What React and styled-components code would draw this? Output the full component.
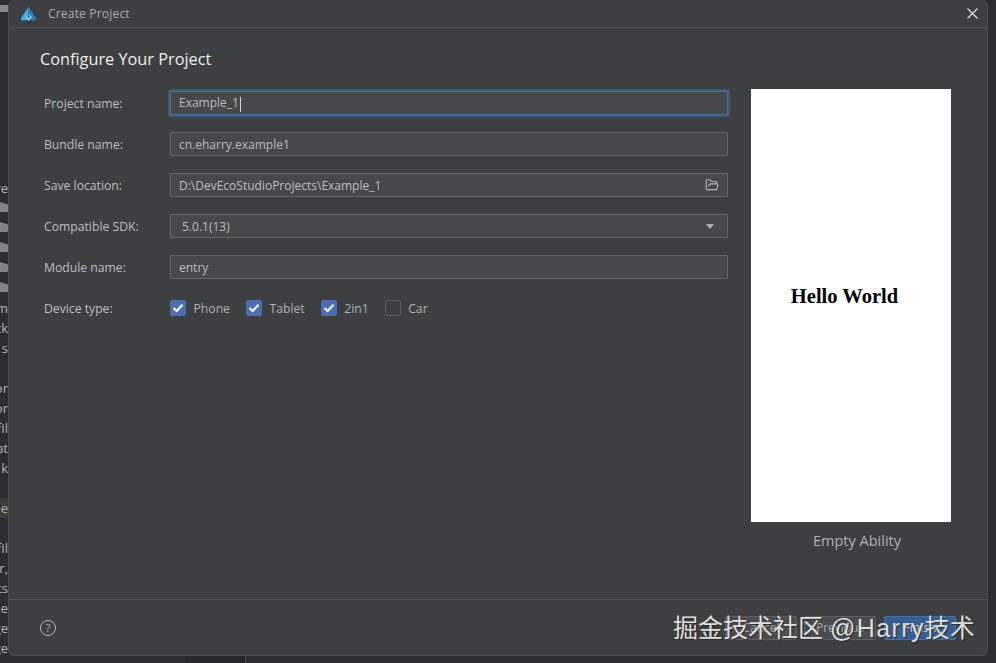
import React from 'react';
import styled, { createGlobalStyle } from 'styled-components';
import { LuFolderOpen } from 'react-icons/lu';

const sideRows = ['', '', '', '', '', '', '', '', 're', 'f', 'f', 'f', 'f', 'f', 'm', 'ck', 's', '', 'or', 'or', 'fil', 'at', 'k', '', 'e', '', 'fil', 'r,', 'ts', 'e', 'ge', 'ge'];
const fields = [
  { label: 'Bundle name:', value: 'cn.eharry.example1' },
  { label: 'Save location:', value: 'D:\\DevEcoStudioProjects\\Example_1', folder: true },
  { label: 'Compatible SDK:', value: '5.0.1(13)', select: true },
  { label: 'Module name:', value: 'entry' },
];
const devices = [
  { name: 'Phone', checked: true },
  { name: 'Tablet', checked: true },
  { name: '2in1', checked: true },
  { name: 'Car', checked: false },
];

const GlobalStyle = createGlobalStyle`
  html, body {
    margin: 0;
    height: 100%;
    background: #2b2d30;
    overflow: hidden;
    font-family: "Open Sans", "Noto Sans", "Liberation Sans", sans-serif;
  }
`;

const Page = styled.div`
  position: relative;
  width: 996px;
  height: 663px;
  overflow: hidden;
`;

const Backdrop = styled.div`
  width: 8px;
  padding-top: 5px;
  display: flex;
  flex-direction: column;
  overflow: hidden;
`;

const CornerMark = styled.div`
  height: 7px;
  margin-bottom: 6px;
  flex: none;
  background: #85888b;
`;

const SideRow = styled.div`
  height: 20px;
  flex: none;
  line-height: 20px;
  font-size: 13px;
  color: #b4b6b8;
  white-space: nowrap;
  display: flex;
  justify-content: flex-end;
  background: ${(p) => (p.$active ? '#3d3b38' : 'transparent')};
`;

const SideFolder = styled.div`
  width: 8px;
  height: 10px;
  margin-top: 4px;
  background: #7f8489;
  clip-path: polygon(0 0, 100% 25%, 100% 100%, 0 100%);
`;

const Dialog = styled.div`
  position: absolute;
  left: 8px;
  top: 0;
  width: 980px;
  height: 656px;
  display: flex;
  flex-direction: column;
  box-sizing: border-box;
  background: #3d3f41;
  border: 1px solid #4c4e50;
  border-top: none;
  border-radius: 6px;
`;

const TitleBar = styled.div`
  height: 28px;
  flex: none;
  box-sizing: border-box;
  display: flex;
  align-items: center;
  padding: 0 9px 0 11px;
  gap: 11px;
  border-bottom: 1px solid #515355;
`;

const TitleText = styled.span`
  flex: 1;
  font-size: 12.2px;
  color: #a9abad;
  letter-spacing: 0.1px;
`;

const Body = styled.div`
  flex: 1;
  display: flex;
  padding: 0 37px 0 31px;
  min-height: 0;
`;

const FormColumn = styled.div`
  width: 689px;
  flex: none;
`;

const Heading = styled.h1`
  margin: 20px 0 20px;
  font-size: 16.3px;
  line-height: 23px;
  font-weight: 500;
  color: #eceded;
`;

const Row = styled.div`
  display: flex;
  align-items: center;
  height: 24px;
  margin-bottom: 17px;
  padding-left: 4px;
`;

const Label = styled.label`
  width: 126px;
  flex: none;
  font-size: 12.2px;
  color: #bcbec0;
`;

const Field = styled.div`
  width: 558px;
  height: 24px;
  box-sizing: border-box;
  display: flex;
  align-items: center;
  justify-content: space-between;
  padding: 0 ${(p) => (p.$select ? '13px' : '8px')} 0 ${(p) => (p.$select ? '11px' : '8px')};
  background: #45494a;
  border: 1px solid #646668;
  border-radius: 1px;
  font-size: 12px;
  color: #bcbec0;
  ${(p) => p.$focus && `
    border: 1px solid #4f6f94;
    box-shadow: 0 0 0 2px #3c5a7e;
  `}
`;

const Caret = styled.span`
  display: inline-block;
  width: 1px;
  height: 15px;
  margin-left: 1px;
  vertical-align: middle;
  background: #d8d8d8;
`;

const Arrow = styled.span`
  width: 0;
  height: 0;
  border-left: 4px solid transparent;
  border-right: 4px solid transparent;
  border-top: 5px solid #b0b2b4;
`;

const FolderIcon = styled(LuFolderOpen)`
  width: 14px;
  height: 14px;
  color: #b5b7b9;
`;

const DeviceList = styled.div`
  display: flex;
  align-items: center;
`;

const Device = styled.span`
  display: flex;
  align-items: center;
  gap: 7.5px;
  margin-right: 16px;
  font-size: 12.2px;
  color: #aeb0b2;
`;

const Check = styled.span`
  width: 16px;
  height: 16px;
  box-sizing: border-box;
  display: flex;
  align-items: center;
  justify-content: center;
  border-radius: 2px;
  background: ${(p) => (p.$on ? '#4a6fb5' : 'transparent')};
  border: 1px solid ${(p) => (p.$on ? '#4a6fb5' : '#5f6163')};
`;

const PreviewColumn = styled.div`
  flex: 1;
  padding-left: 22px;
  display: flex;
  flex-direction: column;
`;

const Preview = styled.div`
  margin-top: 61px;
  width: 200px;
  height: 433px;
  flex: none;
  background: #fff;
  padding-top: 196px;
  box-sizing: border-box;
`;

const Hello = styled.div`
  font-family: "Liberation Serif", serif;
  font-weight: 700;
  font-size: 20.5px;
  line-height: 22px;
  color: #000;
  text-align: center;
  padding-right: 13px;
`;

const Caption = styled.div`
  margin-top: 9px;
  width: 212px;
  text-align: center;
  font-size: 14.5px;
  line-height: 20px;
  color: #b0b2b4;
`;

const Footer = styled.div`
  height: 56px;
  flex: none;
  box-sizing: border-box;
  border-top: 1px solid #515355;
  display: flex;
  align-items: center;
  padding: 0 31px;
`;

const HelpIcon = styled.span`
  width: 16px;
  height: 16px;
  box-sizing: border-box;
  border: 1px solid #b5b7b9;
  border-radius: 50%;
  display: flex;
  align-items: center;
  justify-content: center;
  font-size: 11px;
  color: #b5b7b9;
  margin-right: auto;
`;

const Button = styled.button`
  height: 24px;
  box-sizing: border-box;
  width: 72px;
  margin-left: ${(p) => (p.$primary ? '8px' : '7px')};
  padding: 0;
  font: inherit;
  font-size: 12px;
  color: ${(p) => (p.$primary ? '#c9d2de' : '#a9abad')};
  background: ${(p) => (p.$primary ? '#365f91' : '#4a4d4f')};
  border: 1px solid ${(p) => (p.$primary ? '#4372a6' : '#5e6062')};
  border-radius: 2px;
`;

const Watermark = styled.div`
  position: absolute;
  left: 673px;
  top: 612px;
  font-family: "Liberation Sans", "Noto Sans CJK SC", sans-serif;
  font-size: 25px;
  line-height: 32px;
  white-space: nowrap;
  color: #dedede;
  text-shadow: 1px 1px 1px #2e2e2e;
`;

const WatermarkLatin = styled.span`
  letter-spacing: 1.4px;
`;

const BottomShade = styled.div`
  position: absolute;
  left: 185px;
  top: 656px;
  width: 60px;
  height: 7px;
  background: #26282a;
  border-right: 1px solid #4a4c4e;
`;

function LogoMark() {
  return (
    <svg width="17" height="16" viewBox="0 0 17 16" aria-hidden="true">
      <path d="M8.5 1 L1 12 Q0.3 14.5 3 14.5 L6 14.5 L8.5 10 Z" fill="#3fb0e4" />
      <path d="M8.5 1 L16 12 Q16.7 14.5 14 14.5 L11 14.5 L8.5 10 Z" fill="#2a7cc0" />
      <path d="M8.5 7 L12 11.5 L8.5 15 L5 11.5 L6.5 10.5 L8.5 12 L10 10.5 Z" fill="#7bd3f0" />
    </svg>
  );
}

function CloseIcon() {
  return (
    <svg width="11" height="11" viewBox="0 0 11 11" aria-hidden="true">
      <path d="M0.5 0.5 L10.5 10.5 M10.5 0.5 L0.5 10.5" stroke="#e8e8e8" strokeWidth="1.1" />
    </svg>
  );
}

function CheckMark() {
  return (
    <svg width="12" height="10" viewBox="0 0 12 10" aria-hidden="true">
      <path d="M1.5 5 L4.6 8 L10.5 1.8" fill="none" stroke="#fff" strokeWidth="2" />
    </svg>
  );
}

export default function App() {
  return (
    <Page>
      <GlobalStyle />
      <Backdrop>
        <CornerMark />
        {sideRows.map((text, i) =>
          text === 'f' ? (
            <SideRow key={i}><SideFolder /></SideRow>
          ) : (
            <SideRow key={i} $active={text === 'e' && i === 24}>{text}</SideRow>
          )
        )}
      </Backdrop>
      <BottomShade />
      <Dialog>
        <TitleBar>
          <LogoMark />
          <TitleText>Create Project</TitleText>
          <CloseIcon />
        </TitleBar>
        <Body>
          <FormColumn>
            <Heading>Configure Your Project</Heading>
            <Row>
              <Label>Project name:</Label>
              <Field $focus>
                <span>Example_1<Caret /></span>
              </Field>
            </Row>
            {fields.map((f) => (
              <Row key={f.label}>
                <Label>{f.label}</Label>
                <Field $select={f.select}>
                  <span>{f.value}</span>
                  {f.folder && <FolderIcon />}
                  {f.select && <Arrow />}
                </Field>
              </Row>
            ))}
            <Row>
              <Label>Device type:</Label>
              <DeviceList>
                {devices.map((d) => (
                  <Device key={d.name}>
                    <Check $on={d.checked}>{d.checked && <CheckMark />}</Check>
                    {d.name}
                  </Device>
                ))}
              </DeviceList>
            </Row>
          </FormColumn>
          <PreviewColumn>
            <Preview>
              <Hello>Hello World</Hello>
            </Preview>
            <Caption>Empty Ability</Caption>
          </PreviewColumn>
        </Body>
        <Footer>
          <HelpIcon>?</HelpIcon>
          <Button>Cancel</Button>
          <Button>Previous</Button>
          <Button $primary>Finish</Button>
        </Footer>
      </Dialog>
      <Watermark>掘金技术社区 <WatermarkLatin>@Harry</WatermarkLatin>技术</Watermark>
    </Page>
  );
}
